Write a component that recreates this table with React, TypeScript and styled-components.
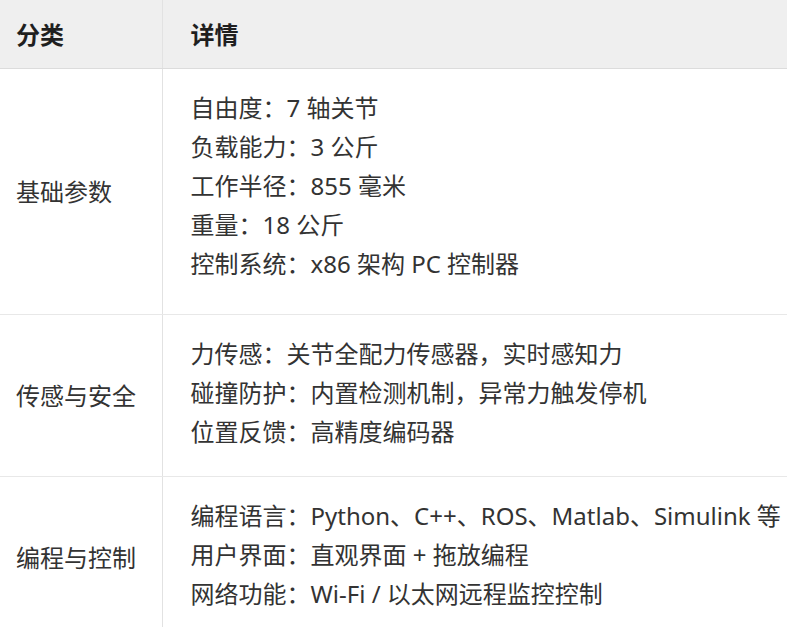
import React from "react";
import styled, { createGlobalStyle } from "styled-components";

const GlobalStyle = createGlobalStyle`
  html, body {
    margin: 0;
    padding: 0;
    background: #ffffff;
  }
  body {
    font-family: "Noto Sans", "Noto Sans CJK SC", sans-serif;
    color: #333333;
  }
`;

const Table = styled.table`
  width: 100%;
  border-collapse: collapse;
  table-layout: fixed;
  font-size: 24px;
`;

const HeadCell = styled.th<{ $first?: boolean }>`
  background: #efefef;
  color: #1f1f1f;
  font-weight: 700;
  text-align: left;
  height: 68px;
  box-sizing: border-box;
  padding: ${(p) => (p.$first ? "0 26px 0 16px" : "0 16px 0 28px")};
  border-bottom: 1px solid #dcdcdc;
  border-right: ${(p) => (p.$first ? "1px solid #e2e2e2" : "none")};
  width: ${(p) => (p.$first ? "162px" : "auto")};
`;

const LabelCell = styled.td`
  padding: 0 26px 0 16px;
  vertical-align: middle;
  border-right: 1px solid #e2e2e2;
  border-bottom: 1px solid #e8e8e8;
  line-height: 39px;
  white-space: nowrap;
`;

const DetailCell = styled.td<{ $bottom: number }>`
  padding: 19px 16px ${(p) => p.$bottom}px 28px;
  vertical-align: top;
  border-bottom: 1px solid #e8e8e8;
  line-height: 39px;
`;

const Line = styled.div`
  white-space: nowrap;
`;

type Row = { label: string; bottom: number; items: string[] };

const rows: Row[] = [
  {
    label: "基础参数",
    bottom: 31,
    items: [
      "自由度：7 轴关节",
      "负载能力：3 公斤",
      "工作半径：855 毫米",
      "重量：18 公斤",
      "控制系统：x86 架构 PC 控制器",
    ],
  },
  {
    label: "传感与安全",
    bottom: 25,
    items: [
      "力传感：关节全配力传感器，实时感知力",
      "碰撞防护：内置检测机制，异常力触发停机",
      "位置反馈：高精度编码器",
    ],
  },
  {
    label: "编程与控制",
    bottom: 25,
    items: [
      "编程语言：Python、C++、ROS、Matlab、Simulink 等",
      "用户界面：直观界面 + 拖放编程",
      "网络功能：Wi-Fi / 以太网远程监控控制",
    ],
  },
];

export default function App() {
  return (
    <>
      <GlobalStyle />
      <Table>
        <thead>
          <tr>
            <HeadCell $first>分类</HeadCell>
            <HeadCell>详情</HeadCell>
          </tr>
        </thead>
        <tbody>
          {rows.map((row) => (
            <tr key={row.label}>
              <LabelCell>{row.label}</LabelCell>
              <DetailCell $bottom={row.bottom}>
                {row.items.map((item) => (
                  <Line key={item}>{item}</Line>
                ))}
              </DetailCell>
            </tr>
          ))}
        </tbody>
      </Table>
    </>
  );
}
